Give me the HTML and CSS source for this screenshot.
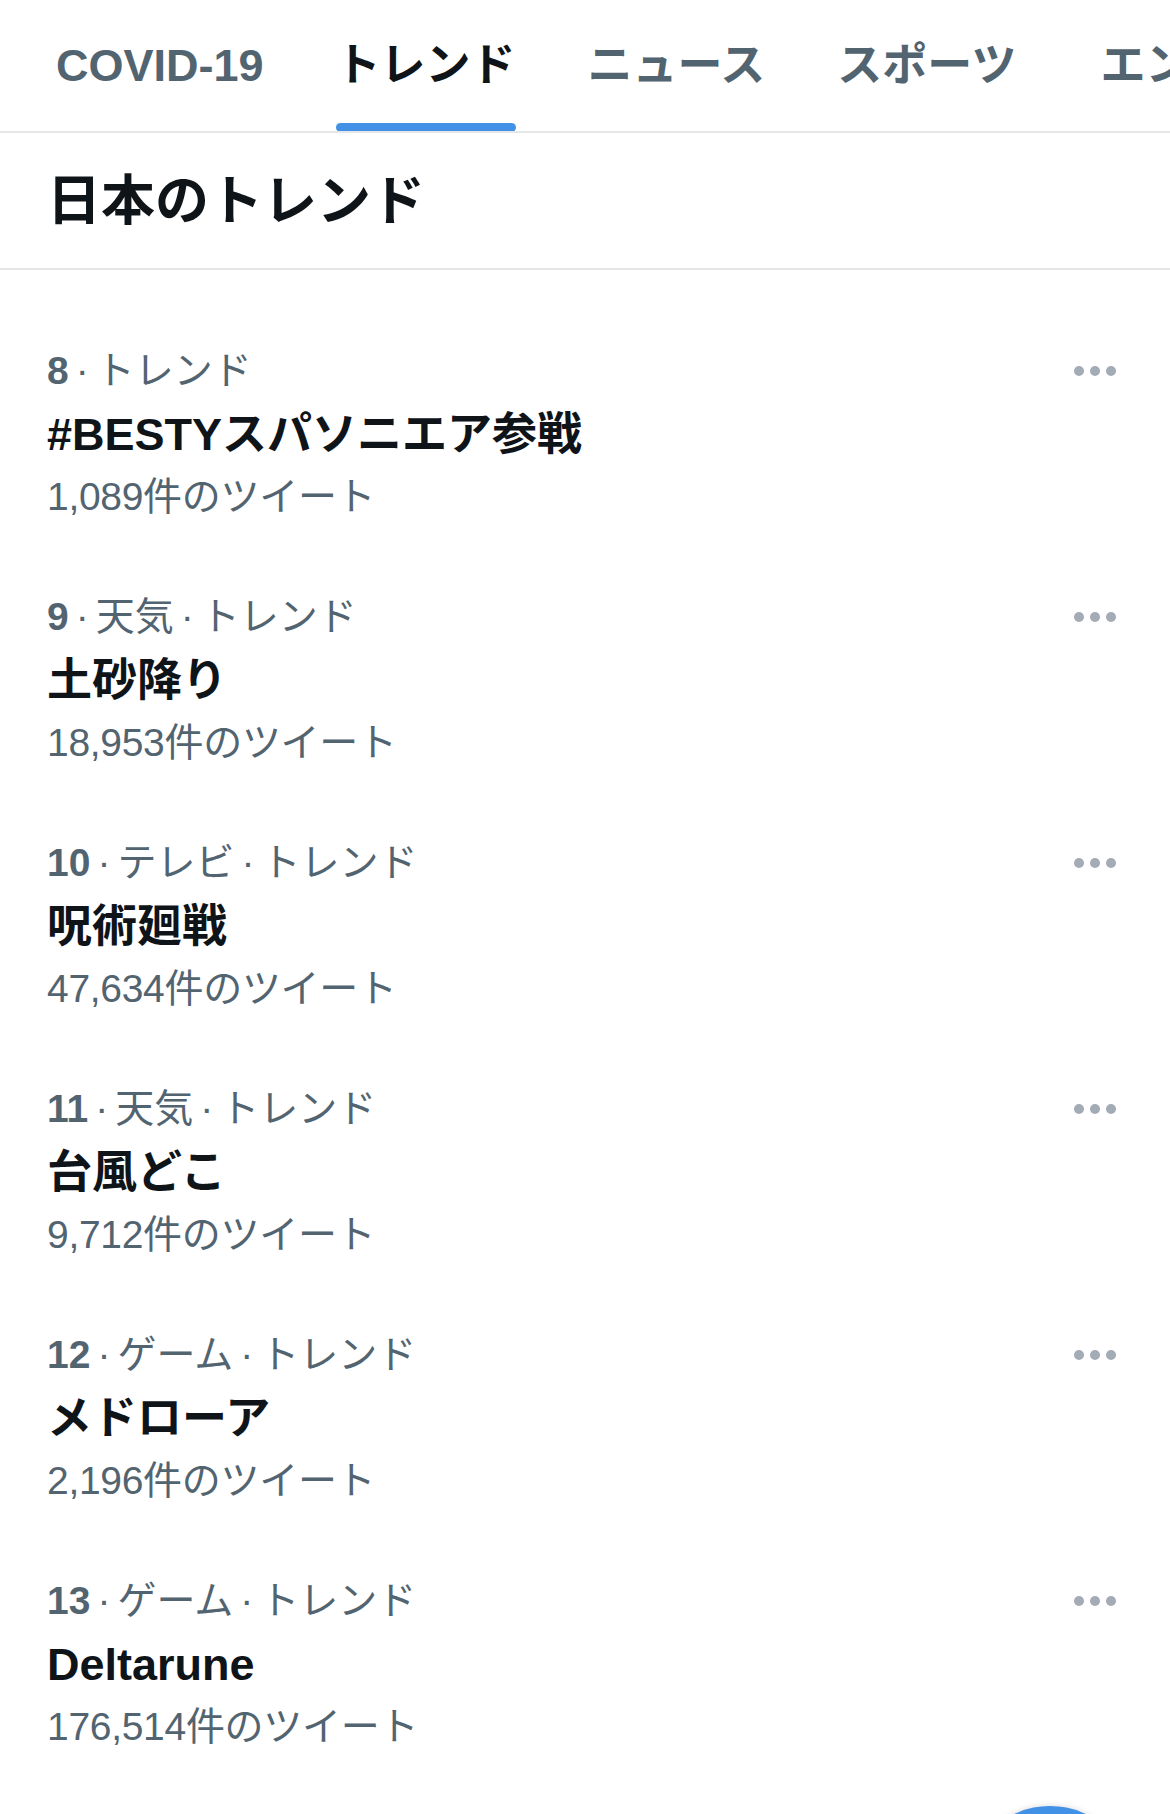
FILE: index.html
```html
<!DOCTYPE html>
<html lang="ja">
<head>
<meta charset="utf-8">
<title>トレンド</title>
<link rel="stylesheet" href="styles.css">
</head>
<body>
<div class="page">
  <nav class="tabs">
    <div class="tab"><span class="tab-label">COVID-19</span></div>
    <div class="tab active"><span class="tab-label">トレンド</span><span class="tab-bar"></span></div>
    <div class="tab"><span class="tab-label">ニュース</span></div>
    <div class="tab"><span class="tab-label">スポーツ</span></div>
    <div class="tab tab-last"><span class="tab-label">エンタメ</span></div>
  </nav>
  <header class="section-head">日本のトレンド</header>
  <ul class="trends">
    <li class="trend">
      <div class="trend-body">
        <div class="meta"><b class="rank">8</b><span class="sep">·</span>トレンド</div>
        <div class="title">#BESTYスパソニエア参戦</div>
        <div class="count">1,089件のツイート</div>
      </div>
      <div class="more"><svg width="42" height="10" viewBox="0 0 42 10"><circle cx="5" cy="5" r="5"/><circle cx="21" cy="5" r="5"/><circle cx="37" cy="5" r="5"/></svg></div>
    </li>
    <li class="trend">
      <div class="trend-body">
        <div class="meta"><b class="rank">9</b><span class="sep">·</span>天気<span class="sep">·</span>トレンド</div>
        <div class="title">土砂降り</div>
        <div class="count">18,953件のツイート</div>
      </div>
      <div class="more"><svg width="42" height="10" viewBox="0 0 42 10"><circle cx="5" cy="5" r="5"/><circle cx="21" cy="5" r="5"/><circle cx="37" cy="5" r="5"/></svg></div>
    </li>
    <li class="trend">
      <div class="trend-body">
        <div class="meta"><b class="rank">10</b><span class="sep">·</span>テレビ<span class="sep">·</span>トレンド</div>
        <div class="title">呪術廻戦</div>
        <div class="count">47,634件のツイート</div>
      </div>
      <div class="more"><svg width="42" height="10" viewBox="0 0 42 10"><circle cx="5" cy="5" r="5"/><circle cx="21" cy="5" r="5"/><circle cx="37" cy="5" r="5"/></svg></div>
    </li>
    <li class="trend">
      <div class="trend-body">
        <div class="meta"><b class="rank">11</b><span class="sep">·</span>天気<span class="sep">·</span>トレンド</div>
        <div class="title">台風どこ</div>
        <div class="count">9,712件のツイート</div>
      </div>
      <div class="more"><svg width="42" height="10" viewBox="0 0 42 10"><circle cx="5" cy="5" r="5"/><circle cx="21" cy="5" r="5"/><circle cx="37" cy="5" r="5"/></svg></div>
    </li>
    <li class="trend">
      <div class="trend-body">
        <div class="meta"><b class="rank">12</b><span class="sep">·</span>ゲーム<span class="sep">·</span>トレンド</div>
        <div class="title">メドローア</div>
        <div class="count">2,196件のツイート</div>
      </div>
      <div class="more"><svg width="42" height="10" viewBox="0 0 42 10"><circle cx="5" cy="5" r="5"/><circle cx="21" cy="5" r="5"/><circle cx="37" cy="5" r="5"/></svg></div>
    </li>
    <li class="trend">
      <div class="trend-body">
        <div class="meta"><b class="rank">13</b><span class="sep">·</span>ゲーム<span class="sep">·</span>トレンド</div>
        <div class="title">Deltarune</div>
        <div class="count">176,514件のツイート</div>
      </div>
      <div class="more"><svg width="42" height="10" viewBox="0 0 42 10"><circle cx="5" cy="5" r="5"/><circle cx="21" cy="5" r="5"/><circle cx="37" cy="5" r="5"/></svg></div>
    </li>
  </ul>
  <div class="fab"></div>
</div>
</body>
</html>
```
FILE: styles.css
```css
html, body {
  margin: 0;
  padding: 0;
  background: #ffffff;
  overflow: hidden;
}

.page {
  position: relative;
  width: 1170px;
  height: 1814px;
  overflow: hidden;
  font-family: "Liberation Sans", "Noto Sans CJK JP", sans-serif;
  color: #0f1419;
}

.tabs {
  display: flex;
  gap: 72px;
  padding-left: 56px;
  height: 131px;
  border-bottom: 2px solid #e4e6e8;
  white-space: nowrap;
  overflow: hidden;
}

.tab {
  display: flex;
  flex-direction: column;
  justify-content: space-between;
  padding-top: 36px;
  flex-shrink: 0;
}

.tab-last {
  margin-left: 12px;
}

.tab-label {
  font-size: 45px;
  line-height: 60px;
  font-weight: 700;
  color: #536471;
}

.tab.active .tab-label {
  color: #0f1419;
}

.tab-bar {
  display: block;
  height: 9px;
  border-radius: 5px;
  background: #4191e6;
  margin-bottom: -1px;
}

.section-head {
  height: 137px;
  box-sizing: border-box;
  padding: 33px 0 0 47px;
  font-size: 54px;
  line-height: 70px;
  font-weight: 700;
  color: #0f1419;
  border-bottom: 2px solid #e4e6e8;
}

.trends {
  list-style: none;
  margin: 0;
  padding: 39px 0 0 0;
}

.trend {
  display: flex;
  align-items: flex-start;
  padding: 32px 54px 30px 47px;
}

.trend-body {
  flex: 1;
}

.meta {
  font-size: 39px;
  line-height: 60px;
  color: #536471;
  margin-bottom: 4px;
}

.rank {
  font-weight: 700;
}

.sep {
  margin: 0 7px;
}

.title {
  font-size: 45px;
  line-height: 60px;
  font-weight: 700;
  color: #0f1419;
}

.count {
  font-size: 39px;
  line-height: 56px;
  margin-top: 4px;
  color: #536471;
  letter-spacing: -0.3px;
}

.more {
  height: 60px;
  display: flex;
  align-items: center;
}

.more svg {
  display: block;
  fill: #a3acb4;
}

.fab {
  position: absolute;
  left: 966px;
  top: 1806px;
  width: 168px;
  height: 168px;
  border-radius: 50%;
  background: #4191e6;
  box-shadow: 0 0 6px rgba(0, 0, 0, 0.15);
}
```
